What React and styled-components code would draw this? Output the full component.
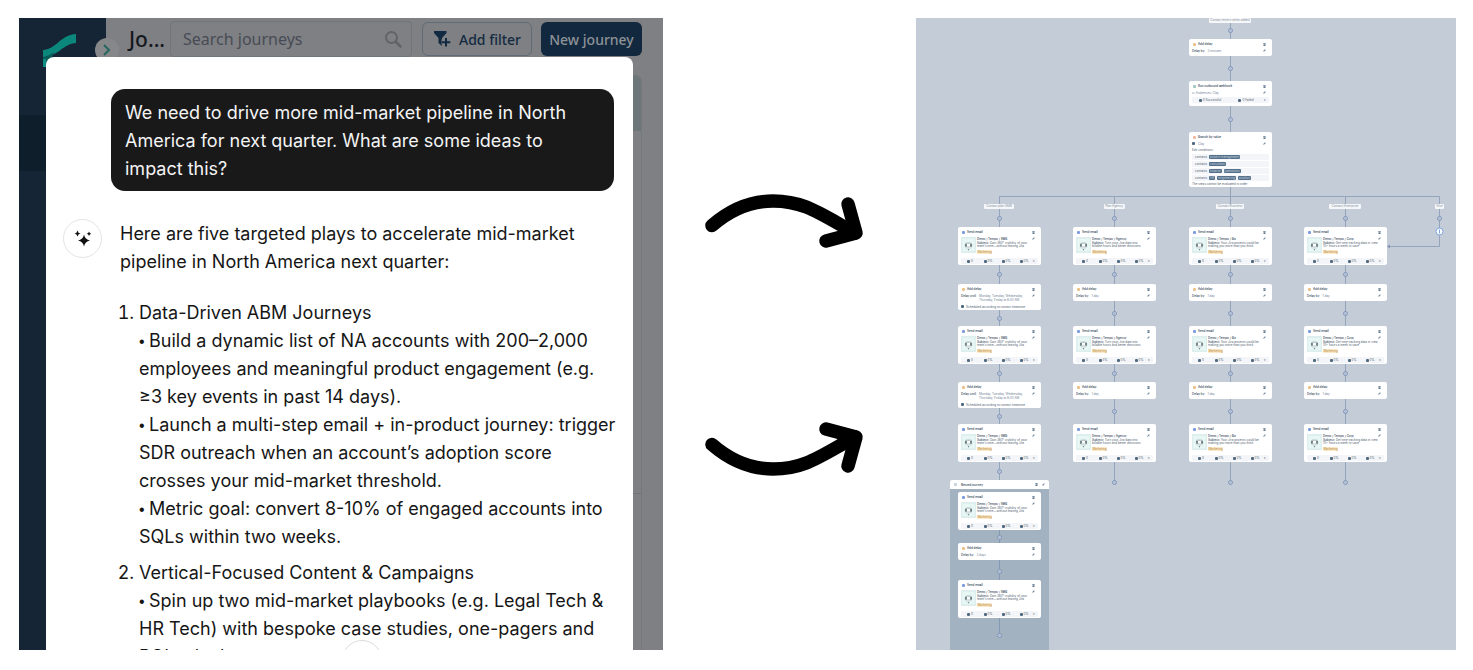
import React from "react";
import styled, { createGlobalStyle } from "styled-components";

const CANVAS_HEIGHT = 640;

const columns = [
  {
    id: "smb",
    x: 42,
    axis: 83.5,
    label: "Contact plan SMB",
    labelWidth: 30,
    name: "Demo / Tempo / SMB",
    subject: ["Gain 360° visibility of your", "team's time—without leaving Jira"],
    longDelay: true,
  },
  {
    id: "agency",
    x: 157,
    axis: 198.5,
    label: "Plan Agency",
    labelWidth: 21,
    name: "Demo / Tempo / Agency",
    subject: ["Turn your Jira data into", "billable hours and better decisions"],
  },
  {
    id: "biz",
    x: 273,
    axis: 314.5,
    label: "Contact Business",
    labelWidth: 28,
    name: "Demo / Tempo / Biz",
    subject: ["Your Jira projects could be", "making you more than you think"],
  },
  {
    id: "corp",
    x: 388,
    axis: 429.5,
    label: "Contact Enterprise",
    labelWidth: 32,
    name: "Demo / Tempo / Corp",
    subject: ["Get time tracking data in view", "10+ hours a week to save"],
  },
];

const conditions = [
  ["project management"],
  ["consultant"],
  ["finance", "operations"],
  ["HR", "engineering", "product"],
];

const plays = [
  {
    title: "Data-Driven ABM Journeys",
    points: [
      ["Build a dynamic list of NA accounts with 200–2,000", "employees and meaningful product engagement (e.g.", "≥3 key events in past 14 days)."],
      ["Launch a multi-step email + in-product journey: trigger", "SDR outreach when an account’s adoption score", "crosses your mid-market threshold."],
      ["Metric goal: convert 8-10% of engaged accounts into", "SQLs within two weeks."],
    ],
  },
  {
    title: "Vertical-Focused Content & Campaigns",
    points: [
      ["Spin up two mid-market playbooks (e.g. Legal Tech &", "HR Tech) with bespoke case studies, one-pagers and", "ROI calculators."],
    ],
  },
];

const Lines = ({ items }) =>
  items.map((line, i) => (
    <React.Fragment key={line}>
      {i > 0 && <br />}
      {line}
    </React.Fragment>
  ));

const TrashIcon = () => (
  <Glyph viewBox="0 0 12 12" aria-hidden="true">
    <path d="M1 1h10v3H1zM2 5h8v7H2z" fill="#5f7890" />
  </Glyph>
);

const PencilIcon = () => (
  <Glyph viewBox="0 0 12 12" aria-hidden="true">
    <path d="M1 11l1-4 6-6 3 3-6 6z" fill="#6d8398" />
  </Glyph>
);

const CardTop = ({ title, tone }) => (
  <CardHeader>
    <Dot $tone={tone} />
    <CardTitle>{title}</CardTitle>
    <TrashIcon />
  </CardHeader>
);

const EmailCard = ({ x, y, name, subject }) => (
  <Card style={{ left: x, top: y }}>
    <CardTop title="Send email" tone="#7d9be0" />
    <EmailBody>
      <Thumb viewBox="0 0 45 48" aria-hidden="true">
        <rect width="45" height="48" fill="#dceeee" />
        <rect x="4" y="5" width="37" height="38" fill="#e8f6f4" />
        <rect x="13" y="17" width="19" height="17" rx="5" fill="#fff" stroke="#b3cfd0" strokeWidth="1.5" />
        <path d="M15 20v9M30 20v9" stroke="#3d5358" strokeWidth="4" />
        <path d="M16 19h13M16 30h13" stroke="#8ba3a6" strokeWidth="2" />
        <circle cx="22.500" cy="38" r="2" fill="#687f86" />
      </Thumb>
      <EmailText>
        <EmailName>{name}</EmailName>
        <Subject>
          <b>Subject: </b>
          <Lines items={subject} />
        </Subject>
        <Badge>Marketing</Badge>
      </EmailText>
      <PencilIcon />
    </EmailBody>
    <Stats>
      {["0", "0%", "0%", "0%"].map((value, i) => (
        <Stat key={i}>
          <StatMark />
          {value}
        </Stat>
      ))}
      <span>▾</span>
    </Stats>
  </Card>
);

const DelayCard = ({ x, y, amount, long }) => (
  <Card style={{ left: x, top: y }}>
    <CardTop title="Add delay" tone="#ecc089" />
    <Detail $tall={long}>
      <b>{long ? "Delay until" : "Delay by"}</b>
      <Value>
        {long ? (
          <Lines items={["Monday, Tuesday, Wednesday,", "Thursday, Friday at 8:00 AM"]} />
        ) : (
          amount
        )}
      </Value>
      <PencilIcon />
    </Detail>
    {long && (
      <Note>
        <StatMark />
        Scheduled according to contact timezone
      </Note>
    )}
  </Card>
);

const Joint = ({ x, y }) => (
  <g>
    <circle cx={x} cy={y} r="2" fill="#cdd6e3" stroke="#7e93b6" />
    <path d={`M${x - 1} ${y}h2M${x} ${y - 1}v2`} stroke="#8fa1bf" strokeWidth="0.5" />
  </g>
);

const Connectors = () => (
  <Wires viewBox={`0 0 540 ${CANVAS_HEIGHT}`} aria-hidden="true">
    <g fill="none" stroke="#93a4bc">
      <path d="M314.500 4V178" />
      <path d="M83.500 178.500H523.500V228.500H473" />
      <path d="M83.500 178V462M198.500 178V464M314.500 178V464M429.500 178V464" />
    </g>
    <path d="M471 228.500l3-2v4z" fill="#8295b3" />
    {[12.5, 50.5, 101.5].map((y) => (
      <Joint key={y} x={314.5} y={y} />
    ))}
    {columns.map(({ id, axis, longDelay }) =>
      (longDelay ? [200.5, 256.5, 300.5, 355.5, 398.5, 453.5] : [200.5, 256.5, 295.5, 355.5, 393.5, 464.5]).map(
        (y) => <Joint key={id + y} x={axis} y={y} />
      )
    )}
    <Joint x={523.5} y={200.5} />
    <circle cx="523.500" cy="213.500" r="3.500" fill="#fff" stroke="#7fa5df" />
    <path d="M523.500 211.500v4" stroke="#7fa5df" />
  </Wires>
);

const NestedJourney = () => {
  const { name, subject } = columns[0];
  return (
    <>
      <Nested>
        <NestedHeader>
          <Dot $tone="#c9d1da" />
          <CardTitle>Nested journey</CardTitle>
          <TrashIcon />
          <PencilIcon />
        </NestedHeader>
        <NestedWires viewBox="0 0 99 170" aria-hidden="true">
          <path d="M49.500 10V145" stroke="#8499b4" />
          {[47.5, 81.5, 145.5].map((y) => (
            <Joint key={y} x={49.5} y={y} />
          ))}
        </NestedWires>
      </Nested>
      <EmailCard x={42} y={474} name={name} subject={subject} />
      <DelayCard x={42} y={525} amount="3 days" />
      <EmailCard x={42} y={562} name={name} subject={subject} />
    </>
  );
};

const JourneyCanvas = () => (
  <Canvas>
    <Connectors />
    <Tag style={{ left: 293, top: 0, width: 42 }}>Contact enters when added</Tag>
    <DelayCard x={273} y={21} amount="3 minutes" />
    <Card style={{ left: 273, top: 63 }}>
      <CardTop title="Run outbound webhook" tone="#9fc9c5" />
      <Detail>
        <Value>✉ Audiences: Clay</Value>
        <PencilIcon />
      </Detail>
      <Stats $top={2} $bottom={2}>
        <Stat>
          <StatMark />0 Successful
        </Stat>
        <Stat>
          <StatMark />0 Failed
        </Stat>
        <span>▾</span>
      </Stats>
    </Card>
    <Card style={{ left: 273, top: 114 }}>
      <CardTop title="Branch by value" tone="#f2b9a1" />
      <Detail>
        <StatMark />
        <Value>Clay</Value>
        <PencilIcon />
      </Detail>
      <Small>Edit conditions</Small>
      <Conditions>
        {conditions.map((pills) => (
          <Condition key={pills[0]}>
            contains
            {pills.map((pill) => (
              <Pill key={pill}>{pill}</Pill>
            ))}
          </Condition>
        ))}
      </Conditions>
      <Small>The steps cannot be evaluated in order</Small>
    </Card>
    {columns.map(({ id, x, axis, label, labelWidth, name, subject, longDelay }) => (
      <React.Fragment key={id}>
        <Tag style={{ left: axis - 0.5 - labelWidth / 2, top: 186, width: labelWidth }}>{label}</Tag>
        {[209, 308, 406].map((y) => (
          <EmailCard key={y} x={x} y={y} name={name} subject={subject} />
        ))}
        <DelayCard x={x} y={266} amount="1 day" long={longDelay} />
        <DelayCard x={x} y={364} amount="1 day" long={longDelay} />
      </React.Fragment>
    ))}
    <Tag style={{ left: 519, top: 186, width: 9 }}>Else</Tag>
    <NestedJourney />
  </Canvas>
);

const Arrow = ({ up }) => (
  <ArrowSvg viewBox="0 0 164 62" aria-hidden="true">
    <g
      transform={up ? "matrix(1 0 0 -1 0 62)" : undefined}
      fill="none"
      stroke="#000"
      strokeWidth="13.500"
      strokeLinecap="round"
      strokeLinejoin="round"
    >
      <path d="M9 33.500C28 17 49 9 70 9c31 0 46 12 82 32" />
      <path d="M145 12l8 29-30 8" />
    </g>
  </ArrowSvg>
);

const Logo = () => (
  <LogoSvg viewBox="0 0 33 33" aria-hidden="true">
    <path d="M0 16C14 15 17 1 33 0v9C20 10 15 22 0 24z" fill="#0c877c" />
    <path d="M0 23c5-1 8-3 11-5l-6 15H0z" fill="#075e59" />
    <path d="M0 25h3v8H0z" fill="#0d8f84" />
  </LogoSvg>
);

const App = () => (
  <Page>
    <GlobalStyle />
    <Workspace>
      <Sidebar>
        <Logo />
        <ActiveItem />
      </Sidebar>
      <Main>
        <TopBar>
          <Heading>Jo...</Heading>
          <SearchBox>
            <input type="text" placeholder="Search journeys" aria-label="Search journeys" />
            <svg viewBox="0 0 18 18" width="18" height="18" aria-hidden="true">
              <circle cx="7.500" cy="7.500" r="5.500" fill="none" stroke="#606468" strokeWidth="2" />
              <path d="M12 12l4.500 4.500" stroke="#606468" strokeWidth="2.500" strokeLinecap="round" />
            </svg>
          </SearchBox>
          <FilterButton type="button">
            <svg viewBox="0 0 18 18" width="18" height="18" aria-hidden="true">
              <path d="M1 1h12.500v2L9 8v8l-3.500-3V8L1 3z" fill="#122a41" />
              <path d="M13 7.500v9M8.500 12h9" stroke="#7f8083" strokeWidth="5" />
              <path d="M13 8v8.500M8.700 12.200h8.600" stroke="#122a41" strokeWidth="2" />
            </svg>
            Add filter
          </FilterButton>
          <NewButton type="button">New journey</NewButton>
        </TopBar>
        <TableArea>
          <TableHead />
          <TableRow />
        </TableArea>
      </Main>
      <Toggle type="button" aria-label="Expand menu">
        <svg viewBox="0 0 12 14" width="12" height="14" aria-hidden="true">
          <path d="M3 2l5 5-5 5" fill="none" stroke="#24665f" strokeWidth="2" />
        </svg>
      </Toggle>
      <Modal>
        <Question>
          We need to drive more mid-market pipeline in North
          <br />
          America for next quarter. What are some ideas to
          <br />
          impact this?
        </Question>
        <Answer>
          <Avatar>
            <svg viewBox="0 0 20 20" width="20" height="20" aria-hidden="true">
              <path d="M11 5.500q1 5.200 6 6-5 .8-6 6-1-5.200-6-6 5-.8 6-6z" fill="#111" />
              <path d="M4.500 1.500q.5 2.600 3 3-2.500.4-3 3-.5-2.600-3-3 2.500-.4 3-3zM16 2.500q.4 1.800 2.300 2.200-1.900.4-2.300 2.200-.4-1.800-2.300-2.200Q15.600 4.300 16 2.500z" fill="#111" />
            </svg>
          </Avatar>
          <Reply>
            <p>
              Here are five targeted plays to accelerate mid-market
              <br />
              pipeline in North America next quarter:
            </p>
            <ol>
              {plays.map(({ title, points }) => (
                <li key={title}>
                  {title}
                  {points.map((lines) => (
                    <div key={lines[0]}>
                      <Bullet>• </Bullet>
                      <Lines items={lines} />
                    </div>
                  ))}
                </li>
              ))}
            </ol>
          </Reply>
        </Answer>
        <ScrollButton type="button" aria-label="Scroll to bottom" />
      </Modal>
    </Workspace>
    <Arrows>
      <Arrow />
      <Arrow up />
    </Arrows>
    <JourneyCanvas />
  </Page>
);

const GlobalStyle = createGlobalStyle`
  * {
    box-sizing: border-box;
  }
  body {
    margin: 0;
    background: #fff;
    font-family: Inter, "Liberation Sans", sans-serif;
  }
`;

const Page = styled.main`
  display: grid;
  grid-template-columns: 644fr 253fr 540fr;
  height: 100vh;
  padding: 18px 17px 20px 19px;
`;

const Workspace = styled.section`
  position: relative;
  display: grid;
  grid-template-columns: 87px minmax(0, 1fr);
  overflow: hidden;
  background: #7f8083;
  font-family: "Noto Sans", "Open Sans", sans-serif;
`;

const Sidebar = styled.nav`
  padding-top: 16px;
  background: #152536;
`;

const LogoSvg = styled.svg`
  display: block;
  width: 33px;
  height: 33px;
  margin-left: 24px;
`;

const ActiveItem = styled.div`
  height: 56px;
  margin-top: 48px;
  background: #0e1e2a;
`;

const Main = styled.div`
  display: flex;
  flex-direction: column;
  padding: 4px 21px 0 23px;
  background: #7f8083;
`;

const TopBar = styled.header`
  display: flex;
  align-items: center;
  height: 34px;
`;

const Heading = styled.h1`
  flex: none;
  width: 41px;
  margin: 0;
  color: #14171d;
  font-size: 21px;
  font-weight: 500;
`;

const SearchBox = styled.label`
  display: flex;
  flex: 1;
  align-items: center;
  min-width: 0;
  height: 36px;
  margin-right: 10px;
  padding: 0 9px 0 12px;
  border: 1px solid #6f7579;
  border-radius: 4px;
  input {
    flex: 1;
    min-width: 0;
    padding: 0;
    border: none;
    outline: none;
    background: none;
    color: #41464d;
    font: inherit;
    font-size: 16px;
  }
  input::placeholder {
    color: #474b55;
  }
`;

const FilterButton = styled.button`
  display: flex;
  flex: none;
  align-items: center;
  justify-content: center;
  gap: 8px;
  width: 110px;
  height: 34px;
  padding: 0;
  border: 1px solid #5f6b75;
  border-radius: 6px;
  background: none;
  color: #132a41;
  font-family: inherit;
  font-size: 14px;
  font-weight: 500;
  white-space: nowrap;
`;

const NewButton = styled(FilterButton)`
  width: 101px;
  margin-left: 9px;
  border: none;
  background: #12283f;
  color: #8d9297;
`;

const TableArea = styled.div`
  flex: 1;
  margin-top: 19px;
  border-right: 1px solid #76797c;
  border-radius: 0 6px 0 0;
`;

const TableHead = styled.div`
  height: 56px;
  border-radius: 0 6px 0 0;
  background: #6d7678;
`;

const TableRow = styled.div`
  height: 363px;
  border-bottom: 1px solid #6f7375;
`;

const Toggle = styled.button`
  position: absolute;
  top: 20px;
  left: 76px;
  display: flex;
  align-items: center;
  justify-content: center;
  width: 24px;
  height: 24px;
  padding: 0;
  border: none;
  border-radius: 50%;
  background: #858789;
`;

const Modal = styled.div`
  position: absolute;
  inset: 39px 30px 0 27px;
  overflow: hidden;
  padding: 32px 19px 0 17px;
  border-radius: 8px 8px 0 0;
  background: #fff;
  color: #161616;
  font-family: Inter, "Liberation Sans", sans-serif;
  font-size: 18px;
  line-height: 28px;
  white-space: nowrap;
`;

const Question = styled.div`
  margin-left: 48px;
  padding: 10px 14px 8px;
  border-radius: 14px;
  background: #19191a;
  color: #f4f4f4;
`;

const Answer = styled.div`
  display: flex;
  gap: 18px;
  margin-top: 28px;
`;

const Avatar = styled.div`
  display: flex;
  flex: none;
  align-items: center;
  justify-content: center;
  width: 39px;
  height: 39px;
  border: 1px solid #e3e3e3;
  border-radius: 50%;
`;

const Reply = styled.div`
  padding-top: 1px;
  p {
    margin: 0;
  }
  ol {
    margin: 23px 0 0;
    padding-left: 19px;
  }
  li + li {
    margin-top: 8px;
  }
`;

const Bullet = styled.span`
  font-family: "Liberation Sans", sans-serif;
  font-size: 16px;
  line-height: 1;
`;

const ScrollButton = styled.button`
  position: absolute;
  bottom: -30px;
  left: 50%;
  width: 40px;
  height: 40px;
  margin-left: 2px;
  border: 1px solid #dcdcdc;
  border-radius: 50%;
  background: #fff;
`;

const Arrows = styled.div`
  display: flex;
  flex-direction: column;
  gap: 162px;
  padding: 174px 0 0 40px;
`;

const ArrowSvg = styled.svg`
  flex: none;
  width: 164px;
  height: 62px;
`;

const Canvas = styled.section`
  position: relative;
  overflow: hidden;
  background: #c4ccd7;
  color: #50606f;
  font-size: 3px;
  line-height: 4px;
  white-space: nowrap;
`;

const Wires = styled.svg`
  position: absolute;
  top: 0;
  left: 0;
  width: 540px;
  height: ${CANVAS_HEIGHT}px;
`;

const Tag = styled.div`
  position: absolute;
  height: 5px;
  border-radius: 1px;
  background: #f5f7f9;
  color: #8390a0;
  line-height: 5px;
  text-align: center;
`;

const Card = styled.article`
  position: absolute;
  width: 83px;
  padding: 3px 3px 1px;
  border-radius: 2px;
  background: #fff;
`;

const CardHeader = styled.div`
  display: flex;
  align-items: center;
  gap: 2px;
  height: 4px;
  padding: 0 3px 0 1px;
`;

const Dot = styled.span`
  flex: none;
  width: 3px;
  height: 3px;
  border-radius: 1px;
  background: ${(props) => props.$tone};
`;

const CardTitle = styled.span`
  flex: 1;
  color: #26384b;
  font-weight: 500;
`;

const Glyph = styled.svg`
  flex: none;
  width: 3px;
  height: 3px;
`;

const EmailBody = styled.div`
  display: flex;
  gap: 1px;
  height: 16px;
  margin-top: 3px;
  padding-right: 3px;
`;

const Thumb = styled.svg`
  flex: none;
  width: 15px;
  height: 16px;
`;

const EmailText = styled.div`
  flex: 1;
  min-width: 0;
`;

const EmailName = styled.div`
  color: #2e4053;
  font-weight: 500;
`;

const Subject = styled.div`
  margin-top: 1px;
  line-height: 3px;
  b {
    font-weight: 600;
  }
`;

const Badge = styled.span`
  display: block;
  width: 15px;
  height: 4px;
  margin-top: 2px;
  border-radius: 1px;
  background: #fae8c8;
  color: #b98a3e;
  text-align: center;
`;

const Stats = styled.div`
  display: flex;
  align-items: center;
  height: 6px;
  margin: ${(props) => props.$top || 5}px 0 ${(props) => props.$bottom || 0}px;
  padding-right: 3px;
  border-radius: 1px;
  background: #f3f5f8;
`;

const Stat = styled.span`
  display: flex;
  flex: 1;
  align-items: center;
  justify-content: center;
  gap: 1px;
`;

const StatMark = styled.i`
  flex: none;
  width: 3px;
  height: 3px;
  border-radius: 1px;
  background: #506a82;
`;

const Detail = styled.div`
  display: flex;
  gap: 3px;
  height: ${(props) => (props.$tall ? 8 : 4)}px;
  margin: 3px 0 2px;
  padding-right: 3px;
  color: #6f8296;
  b {
    color: #33475b;
    font-weight: 500;
  }
`;

const Value = styled.span`
  flex: 1;
`;

const Note = styled.div`
  display: flex;
  align-items: center;
  gap: 2px;
  height: 5px;
`;

const Small = styled.div`
  height: 4px;
`;

const Conditions = styled.div`
  display: grid;
  gap: 1px;
  margin: 2px 0 1px;
`;

const Condition = styled.div`
  display: flex;
  align-items: center;
  gap: 2px;
  height: 6px;
  padding-left: 3px;
  background: #f3f5f8;
`;

const Pill = styled.span`
  padding: 0 1px;
  border-radius: 1px;
  background: #54708a;
  color: #c4d1dc;
`;

const Nested = styled.div`
  position: absolute;
  top: 462px;
  bottom: 0;
  left: 34px;
  width: 99px;
  overflow: hidden;
  border-radius: 2px 2px 0 0;
  background: #a2b2c1;
`;

const NestedHeader = styled.div`
  display: flex;
  align-items: center;
  gap: 4px;
  height: 9px;
  padding: 0 4px;
  background: #fff;
`;

const NestedWires = styled.svg`
  display: block;
  width: 99px;
  height: 170px;
  margin-top: 1px;
`;

export default App;
